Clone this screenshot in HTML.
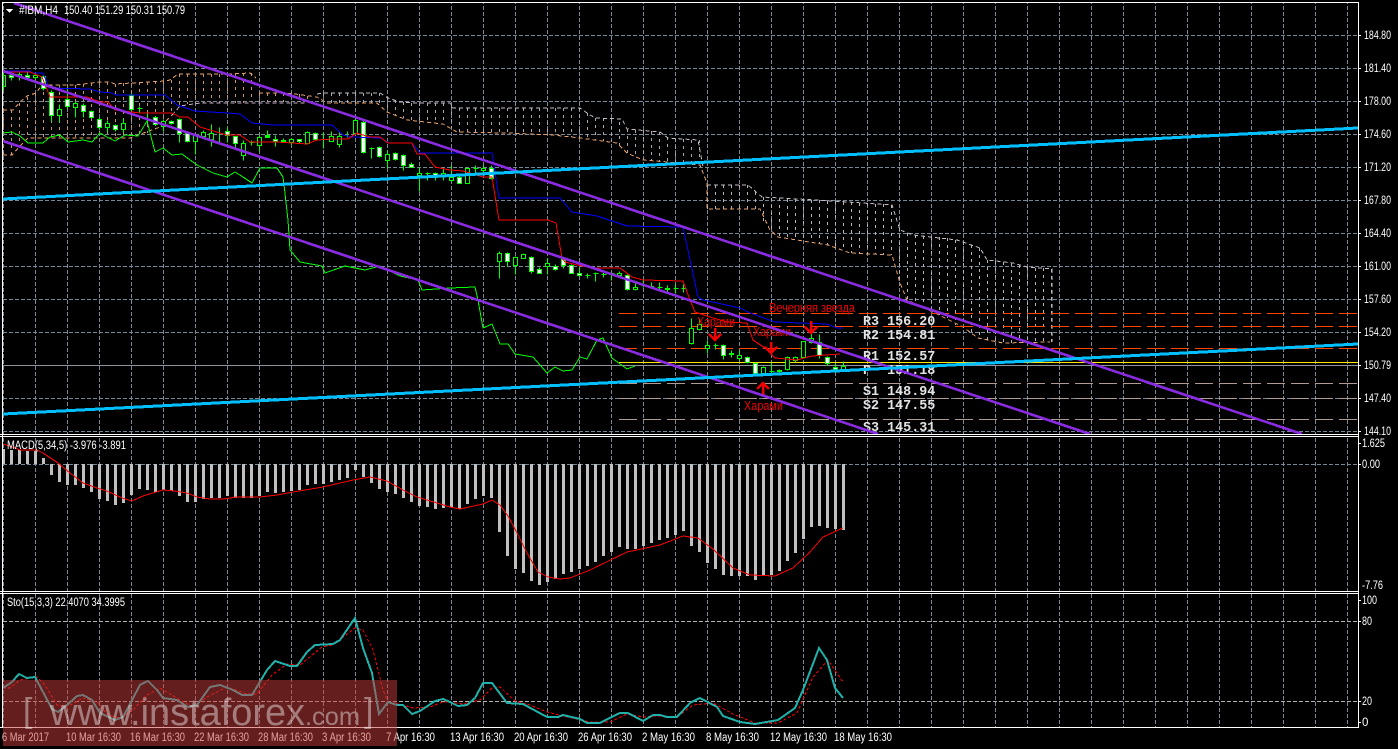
<!DOCTYPE html>
<html><head><meta charset="utf-8"><title>#IBM H4</title>
<style>
html,body{margin:0;padding:0;background:#000;width:1398px;height:749px;overflow:hidden}
svg{display:block}
svg path,svg rect{shape-rendering:crispEdges}
text{font-family:"Liberation Sans",sans-serif;font-size:11.5px;fill:#fff}
.m{font-family:"Liberation Mono",monospace;font-size:13.4px;font-weight:bold;fill:#e4e4e4;white-space:pre}
.r{fill:#f00000;font-size:12.5px}
.n{fill:none}
</style></head><body>
<svg width="1398" height="749" viewBox="0 0 1398 749" xmlns="http://www.w3.org/2000/svg">
<defs><pattern id="v" width="32" height="6" patternUnits="userSpaceOnUse"><rect x="3" width="1" height="4" fill="#7c8894"/></pattern></defs>
<rect width="1398" height="749" fill="#000"/>
<!-- grid -->
<rect x="3" y="3" width="1355" height="431" fill="url(#v)"/>
<rect x="3" y="437" width="1355" height="154" fill="url(#v)"/>
<rect x="3" y="594" width="1355" height="133" fill="url(#v)"/>
<path class="n" stroke="#778899" stroke-dasharray="4 2" d="M3 35.5H1358M3 68.5H1358M3 101.5H1358M3 134.5H1358M3 167.5H1358M3 200.5H1358M3 233.5H1358M3 266.5H1358M3 299.5H1358M3 332.5H1358M3 398.5H1358M3 431.5H1358M3 464.5H1358"/>
<path class="n" stroke="#b4b4b4" stroke-dasharray="4 2" d="M3 621.5H1358M3 701.5H1358"/>
<!-- cloud hatch -->
<g class="n" stroke-dasharray="3 4" transform="translate(.5 0)">
<path stroke="#c89468" d="M3 110V155M11 110V155M19 103V147M27 97V139M35 93V138M43 85V138M51 85V138M59 85V138M67 85V138M75 85V138M83 84V138M91 83V138M99 82V138M107 82V138M115 84V138M123 83V138M131 83V138M139 82V136M147 82V133M155 81V129M163 81V126M171 80V116M179 74V106M187 74V104M195 74V103M203 74V103M211 74V103M219 74V103M227 74V103M235 73V103M243 73V103M251 73V102M259 93V102M267 93V102M275 93V102M283 93V102M291 94V102M299 94V102M307 96V102"/>
<path stroke="#b0a8b0" d="M323 93V100M331 93V103M339 93V103M347 93V103M355 93V103M363 93V103M371 93V103M379 93V105M387 98V112M395 100V115M403 102V118M411 103V121M419 103V121M427 103V122M435 103V123M443 103V124M451 105V128M459 108V132M467 108V133M475 108V133M483 108V133M491 108V133M499 108V133M507 108V133M515 108V135M523 108V135M531 108V135M539 108V135M547 108V135M555 108V135M563 108V136M571 108V137M579 108V138M587 113V139M595 118V140M603 118V141M611 119V142M619 122V148M627 129V153M635 130V156M643 130V160M651 131V161M659 132V162M667 137V162M675 139V163M683 139V164M691 140V165M699 140V165"/>
<path stroke="#b8b4b8" d="M707 185V209M715 185V209M723 185V209M731 185V209M739 185V209M747 185V209M755 192V209M763 197V225M771 198V231M779 198V237M787 199V239M795 199V240M803 200V241M811 200V242M819 200V243M827 201V245M835 201V246M843 202V249M851 202V253M859 203V253M867 203V254M875 204V254M883 204V255M891 205V255M899 228V280M907 233V300M915 235V304M923 236V308M931 237V311M939 237V315M947 238V320M955 240V325M963 242V327M971 245V333M979 248V338M987 260V340M995 261V341M1003 262V343M1011 263V343M1019 265V343M1027 267V342M1035 268V342M1043 268V342M1051 269V342"/>
</g>
<!-- cloud edges -->
<g class="n" stroke-dasharray="4 3">
<path stroke="#e8a068" d="M3 110H13L20 102L27 96L36 93L42 85H75L100 82H110L115 84L165 81L170 80L178 74H230L250 73L256 78"/>
<path stroke="#e8a068" d="M3 155H12L20 146L28 138H130L160 127L172 115"/>
<path stroke="#e8a068" d="M259 93H283L295 94L317 97L327 103H377L387 112L407 120L443 124L457 132L507 133L553 135L580 138L617 143L627 153L643 160L668 162L700 165L707 183V209H760L770 230L778 237L828 245L850 253L892 255L900 283L907 300L933 312L963 327L978 338L1003 343L1050 342"/>
<path stroke="#c8b0c8" d="M172 115L180 106L200 103H305"/>
<path stroke="#c8bcc8" d="M317 94L323 93H380L388 98L400 102L413 103H450L453 108H580L587 113L595 118L622 119L627 129L660 132L668 138L698 140L703 167"/>
<path stroke="#c8bcc8" d="M707 185H748L762 197L780 198L833 201L892 205L900 230L913 235L957 240L980 248L987 260L1013 263L1027 267L1052 269V342"/>
</g>
<!-- pivots -->
<g class="n" stroke-dasharray="18 6">
<path stroke="#ff4500" d="M619 313.5H1358M619 326.5H1358M619 348.5H1358"/>
<path stroke="#b09a94" d="M619 383.5H1358M619 398.5H1358M619 419.5H1358"/>
</g>
<path stroke="#8d949c" d="M3 365.5H1358"/>
<path stroke="#ffe600" d="M619 362.5H1358"/>
<!-- pivot labels -->
<text class="m" x="863" y="325">R3 156.20</text>
<text class="m" x="863" y="339">R2 154.81</text>
<text class="m" x="863" y="360">R1 152.57</text>
<text class="m" x="863" y="374">P  151.18</text>
<text class="m" x="863" y="395">S1 148.94</text>
<text class="m" x="863" y="409">S2 147.55</text>
<text class="m" x="863" y="431">S3 145.31</text>
<!-- kijun / tenkan / chikou -->
<path class="n" stroke="#00ff00" d="M3 133L12 132L20 136L28 143H43L50 137L60 135L68 142L83 140L92 142L100 133L107 137L115 141L125 135L138 136L147 121L155 152L163 148L172 155L182 154L197 165L207 170L213 173L227 177L235 172L243 177L252 183L260 168H277L283 177L285 193L288 220L290 250L300 262L322 266L325 273L345 266L365 270L380 266L400 276L418 280L422 290L450 288L475 287L478 300L483 328L492 324L500 344H508L515 354L533 357L547 373L555 367L563 371L572 370L580 357L587 359L597 340L603 338L612 358L627 369L635 366"/>
<!-- candles -->
<g transform="translate(.5 .5)">
<path class="n" stroke="#00ff00" d="M3 72V90M11 72V80M19 71V80M27 72V80M35 74V82M43 75V90M51 90V121M59 104V122M67 87V108M75 101V117M83 103V117M91 110V118M99 117V130M107 120V132M115 124V131M123 118V132M131 93V111M139 106V112M147 113V123M155 116V125M163 119V131M171 120V124M179 118V142M187 132V142M195 134V154M203 130V137M211 124V146M219 127V142M227 127V142M235 136V147M243 140V160M251 140V145M259 135V151M267 130V137M275 135V146M283 138V142M291 138V144M299 139V143M307 131V144M315 132V140M323 132V148M331 131V141M339 132V147M347 131V137M355 118V133M363 120V153M371 147V158M379 146V157M387 150V168M395 152V160M403 154V170M411 162V167M419 167V191M427 172V180M435 172V180M443 168V180M451 165V181M459 175V183M467 167V183M475 165V173M483 165V172M491 165V179M499 251V278M507 252V266M515 256V274M523 253V258M531 256V273M539 267V273M547 258V274M555 264V270M563 257V268M571 264V273M579 267V276M587 273V278M595 272V281M603 272V277M611 272V280M619 271V277M627 274V290M635 282V290M643 280V287M651 282V288M659 282V291M667 285V292M675 284V293M683 284V292M691 318V344M699 318V330M707 340V353M715 343V349M723 344V359M731 350V357M739 350V360M747 356V363M755 362V374M763 366V374M771 362V373M779 369V372M787 356V370M795 356V362M803 341V358M811 333V343M819 334V358M827 356V365M835 363V370M843 361V370"/>
<path fill="#000" stroke="#00ff00" d="M3 75h2v11h-2zM17 74h4v2h-4zM33 75h4v2h-4zM57 109h4v6h-4zM73 103h4v4h-4zM105 123h4v4h-4zM121 123h4v6h-4zM161 121h4v5h-4zM193 135h4v6h-4zM201 132h4v4h-4zM209 133h4v6h-4zM241 143h4v12h-4zM257 137h4v8h-4zM289 139h4v3h-4zM305 132h4v11h-4zM329 136h4v5h-4zM337 136h4v8h-4zM353 120h4v13h-4zM385 154h4v6h-4zM417 173h4v2h-4zM441 173h4v2h-4zM449 177h4v3h-4zM465 168h4v15h-4zM481 168h4v2h-4zM497 253h4v8h-4zM513 257h4v8h-4zM521 254h4v4h-4zM545 263h4v3h-4zM617 273h4v2h-4zM633 287h4v2h-4zM689 328h4v15h-4zM697 324h4v5h-4zM705 345h4v3h-4zM737 355h4v3h-4zM761 367h4v6h-4zM785 357h4v12h-4zM793 357h4v3h-4zM801 341h4v16h-4zM809 338h4v4h-4zM841 366h4v3h-4z"/>
<path fill="#fff" stroke="#00ff00" d="M9 75h4v2h-4zM25 75h4v2h-4zM41 76h4v12h-4zM49 92h4v23h-4zM65 99h4v7h-4zM81 105h4v6h-4zM89 111h4v6h-4zM97 119h4v8h-4zM113 125h4v4h-4zM129 95h4v14h-4zM153 117h4v7h-4zM169 121h4v2h-4zM177 119h4v14h-4zM185 133h4v8h-4zM225 131h4v4h-4zM233 136h4v7h-4zM273 139h4v2h-4zM297 139h4v2h-4zM313 133h4v6h-4zM361 122h4v30h-4zM377 147h4v9h-4zM393 153h4v6h-4zM401 155h4v10h-4zM409 164h4v3h-4zM433 173h4v4h-4zM457 177h4v6h-4zM489 168h4v10h-4zM505 253h4v8h-4zM529 257h4v14h-4zM537 269h4v4h-4zM553 266h4v3h-4zM561 259h4v6h-4zM569 265h4v8h-4zM577 273h4v2h-4zM625 275h4v14h-4zM721 345h4v10h-4zM745 357h4v5h-4zM753 363h4v10h-4zM817 342h4v13h-4zM825 357h4v6h-4zM833 367h4v2h-4z"/>
<path fill="#00ff00" stroke="#00ff00" d="M265 135h4v2h-4zM281 140h4v1h-4zM649 286h4v1h-4zM665 288h4v1h-4zM729 353h4v1h-4zM777 370h4v1h-4zM137 108h5M249 142h5M369 148h5M425 173h5M473 168h5M585 275h5M593 273h5M601 274h5M609 273h5M641 285h5M657 287h5M673 288h5M681 288h5M713 345h5M769 371h5"/>
</g>
<path class="n" stroke="#0000ff" d="M3 71H30L32 73H43L48 85L50 88L90 89L100 92L113 93L115 95H165L177 105L195 111L227 113L240 114L252 123L273 125H332L343 135L352 137L380 138L390 143H412L420 153H492L499 198H560L572 212L597 216L627 226L683 227L698 297L703 300L740 308L750 313L775 322L827 324L837 328H843"/>
<path class="n" stroke="#ff0000" d="M3 72H30L42 77L50 97H87L100 102H108L115 110L140 113H172L180 117H188L200 127L227 135H240L250 142H277L307 144L317 140L333 139H348L357 133L363 135L370 137H380L388 143H412L417 154H425L435 167L450 170L463 171L483 177H492L499 220H548L556 223L562 258L565 262L577 265L593 268H620L632 277L643 280L683 281L690 300L695 312L710 317L727 322L747 323L753 340L765 348L775 358L797 360L812 356L840 354"/>
<!-- pattern labels -->
<text class="r" x="769" y="312" textLength="86" lengthAdjust="spacingAndGlyphs">Вечерняя звезда</text>
<text class="r" x="697" y="326" textLength="38" lengthAdjust="spacingAndGlyphs">Харами</text>
<text class="r" x="753" y="336" textLength="38" lengthAdjust="spacingAndGlyphs">Харами</text>
<text class="r" x="744" y="410" textLength="39" lengthAdjust="spacingAndGlyphs">Харами</text>
<path class="n" stroke="#f00000" stroke-width="2.5" d="M715 328V339M709 334L715 340L721 334M771 342V352M765 347L771 353L777 347M811 321V332M805 327L811 333L817 327M763 384V396M757 389L763 383L769 389"/>
<!-- trend lines -->
<path class="n" stroke="#8a2be2" stroke-width="2.6" d="M14 3L1302 434M3 71L1090 434M3 141L878 434"/>
<path class="n" stroke="#00bfff" stroke-width="3" d="M3 199L1358 128M3 414L1358 344"/>
<!-- MACD -->
<path class="n" stroke="#c0c0c0" stroke-width="3" d="M3.500 449V464M11.500 450V464M19.500 450V464M27.500 451V464M35.500 451V464M43.500 458V464M51.500 464V475M59.500 464V482M67.500 464V485M75.500 464V485M83.500 464V488M91.500 464V492M99.500 464V499M107.500 464V501M115.500 464V505M123.500 464V503M131.500 464V495M139.500 464V489M147.500 464V490M155.500 464V492M163.500 464V490M171.500 464V491M179.500 464V496M187.500 464V502M195.500 464V502M203.500 464V499M211.500 464V498M219.500 464V498M227.500 464V496M235.500 464V498M243.500 464V498M251.500 464V498M259.500 464V496M267.500 464V492M275.500 464V493M283.500 464V492M291.500 464V491M299.500 464V490M307.500 464V485M315.500 464V484M323.500 464V484M331.500 464V482M339.500 464V480M347.500 464V478M355.500 464V470M363.500 464V477M371.500 464V483M379.500 464V489M387.500 464V492M395.500 464V494M403.500 464V498M411.500 464V502M419.500 464V506M427.500 464V507M435.500 464V509M443.500 464V508M451.500 464V507M459.500 464V509M467.500 464V504M475.500 464V499M483.500 464V496M491.500 464V498M499.500 464V532M507.500 464V556M515.500 464V569M523.500 464V573M531.500 464V581M539.500 464V585M547.500 464V582M555.500 464V579M563.500 464V574M571.500 464V572M579.500 464V569M587.500 464V566M595.500 464V562M603.500 464V556M611.500 464V552M619.500 464V547M627.500 464V549M635.500 464V549M643.500 464V546M651.500 464V543M659.500 464V540M667.500 464V538M675.500 464V535M683.500 464V531M691.500 464V546M699.500 464V552M707.500 464V563M715.500 464V569M723.500 464V575M731.500 464V576M739.500 464V576M747.500 464V576M755.500 464V580M763.500 464V576M771.500 464V575M779.500 464V571M787.500 464V561M795.500 464V553M803.500 464V539M811.500 464V527M819.500 464V526M827.500 464V528M835.500 464V529M843.500 464V530"/>
<path class="n" stroke="#ff0000" d="M3 444L13 447L20 450H37L43 453L58 463L70 473L83 483L97 488L107 491L122 498L132 501L143 496L163 490L175 491L187 493L197 497L210 499H223L237 497H260L277 495L293 492L323 487L353 480L370 477L387 481L403 490L417 497L437 503L450 507L460 509L483 504L492 500L500 505L508 516L517 533L527 553L538 572L548 577L560 579L570 578L590 570L627 552L660 545L683 536L698 538L713 549L733 568L750 575L775 576L793 568L810 552L823 537L843 528"/>
<!-- Stochastic -->
<path class="n" stroke="#ff0000" stroke-dasharray="3 2" d="M3 688H10L20 680L37 677L45 685L57 705L67 707L83 698L97 702L108 715L120 718L133 710L147 695L160 688L180 700L193 707L207 697L227 687L247 694H257L272 675L287 664L300 665L322 647L333 645L355 628L363 630L373 650L383 690L388 702L403 705L413 708L430 707L443 702H450L463 704L480 700L493 687H500L515 701L530 705L547 712L563 716L590 722H610L627 714L643 717L657 716L677 717L693 705L713 703L733 714L755 723H778L797 713L813 677L828 660L843 682"/>
<path class="n" stroke="#20b2aa" stroke-width="2" d="M3 688L12 682L19 674L27 678L35 677L43 692L52 709L58 712L67 705L77 696L83 695L92 700L100 713L115 720L123 717L140 685L148 681L157 690L163 698L177 700L188 707L197 705L210 687L220 685L233 690L242 695H252L267 670L275 661L290 666H297L307 652L315 645L333 644L340 640L355 618L363 648L372 673L379 714L388 702L397 705H403L412 714L420 711L435 701L443 699L450 702L458 706L467 705L475 698L483 683H492L507 703L523 704L547 717H558L563 715L580 719L587 723H600L620 713H628L643 721L653 715H660L667 717H677L690 703L700 698L717 707L723 716L740 722L755 724L778 720L795 708L803 690L819 648L827 660L835 688L843 698"/>
<!-- frames -->
<path class="n" stroke="#fff" d="M2.500 3V728M1358.500 3V728M2 2.500H1359M0 434.500H1359M0 436.500H1359M0 591.500H1359M0 593.500H1359M0 727.500H1359"/>
<path class="n" stroke="#fff" d="M1358 35.500h3M1358 68.500h3M1358 101.500h3M1358 134.500h3M1358 167.500h3M1358 200.500h3M1358 233.500h3M1358 266.500h3M1358 299.500h3M1358 332.500h3M1358 365.500h3M1358 398.500h3M1358 431.500h3M1358 443.500h3M1358 464.500h3M1358 600.500h3M1358 621.500h3M1358 701.500h3M1358 722.500h3"/>
<path fill="#fff" d="M6 9H13L9.500 13Z"/>
<!-- header text -->
<text x="19" y="14" textLength="39" lengthAdjust="spacingAndGlyphs">#IBM,H4</text>
<text x="64" y="14" textLength="121" lengthAdjust="spacingAndGlyphs">150.40 151.29 150.31 150.79</text>
<text x="7" y="449" textLength="119" lengthAdjust="spacingAndGlyphs">MACD(5,34,5) -3.976 -3.891</text>
<text x="7" y="606" textLength="118" lengthAdjust="spacingAndGlyphs">Sto(15,3,3) 22.4070 34.3995</text>
<!-- axis labels -->
<g>
<text x="1364" y="39" textLength="27" lengthAdjust="spacingAndGlyphs">184.80</text>
<text x="1364" y="72" textLength="27" lengthAdjust="spacingAndGlyphs">181.40</text>
<text x="1364" y="105" textLength="27" lengthAdjust="spacingAndGlyphs">178.00</text>
<text x="1364" y="138" textLength="27" lengthAdjust="spacingAndGlyphs">174.60</text>
<text x="1364" y="171" textLength="27" lengthAdjust="spacingAndGlyphs">171.20</text>
<text x="1364" y="204" textLength="27" lengthAdjust="spacingAndGlyphs">167.80</text>
<text x="1364" y="237" textLength="27" lengthAdjust="spacingAndGlyphs">164.40</text>
<text x="1364" y="270" textLength="27" lengthAdjust="spacingAndGlyphs">161.00</text>
<text x="1364" y="303" textLength="27" lengthAdjust="spacingAndGlyphs">157.60</text>
<text x="1364" y="336" textLength="27" lengthAdjust="spacingAndGlyphs">154.20</text>
<text x="1364" y="369" textLength="27" lengthAdjust="spacingAndGlyphs">150.79</text>
<text x="1364" y="402" textLength="27" lengthAdjust="spacingAndGlyphs">147.40</text>
<text x="1364" y="435" textLength="27" lengthAdjust="spacingAndGlyphs">144.10</text>
<text x="1362" y="447" textLength="23" lengthAdjust="spacingAndGlyphs">1.625</text>
<text x="1362" y="468" textLength="18" lengthAdjust="spacingAndGlyphs">0.00</text>
<text x="1362" y="589" textLength="21" lengthAdjust="spacingAndGlyphs">-7.76</text>
<text x="1362" y="604" textLength="15" lengthAdjust="spacingAndGlyphs">100</text>
<text x="1362" y="625" textLength="10" lengthAdjust="spacingAndGlyphs">80</text>
<text x="1362" y="705" textLength="10" lengthAdjust="spacingAndGlyphs">20</text>
<text x="1362" y="726">0</text>
<text x="2" y="741" textLength="47" lengthAdjust="spacingAndGlyphs">6 Mar 2017</text>
<text x="66" y="741" textLength="55" lengthAdjust="spacingAndGlyphs">10 Mar 16:30</text>
<text x="130" y="741" textLength="55" lengthAdjust="spacingAndGlyphs">16 Mar 16:30</text>
<text x="194" y="741" textLength="55" lengthAdjust="spacingAndGlyphs">22 Mar 16:30</text>
<text x="258" y="741" textLength="55" lengthAdjust="spacingAndGlyphs">28 Mar 16:30</text>
<text x="322" y="741" textLength="49" lengthAdjust="spacingAndGlyphs">3 Apr 16:30</text>
<text x="386" y="741" textLength="49" lengthAdjust="spacingAndGlyphs">7 Apr 16:30</text>
<text x="450" y="741" textLength="54" lengthAdjust="spacingAndGlyphs">13 Apr 16:30</text>
<text x="514" y="741" textLength="54" lengthAdjust="spacingAndGlyphs">20 Apr 16:30</text>
<text x="578" y="741" textLength="54" lengthAdjust="spacingAndGlyphs">26 Apr 16:30</text>
<text x="642" y="741" textLength="53" lengthAdjust="spacingAndGlyphs">2 May 16:30</text>
<text x="706" y="741" textLength="53" lengthAdjust="spacingAndGlyphs">8 May 16:30</text>
<text x="770" y="741" textLength="57" lengthAdjust="spacingAndGlyphs">12 May 16:30</text>
<text x="834" y="741" textLength="58" lengthAdjust="spacingAndGlyphs">18 May 16:30</text>
</g>
<!-- watermark -->
<rect x="3" y="680" width="394" height="66" fill="#c83c3c" fill-opacity=".5"/>
<g opacity=".42">
<text x="23" y="722" style="font-size:34px">[</text>
<text x="50" y="725" style="font-size:38px" textLength="255" lengthAdjust="spacingAndGlyphs">www.instaforex</text>
<text x="305" y="725" style="font-size:25px" textLength="55" lengthAdjust="spacingAndGlyphs">.com</text>
<text x="364" y="722" style="font-size:34px">]</text>
</g>
</svg>
</body></html>
